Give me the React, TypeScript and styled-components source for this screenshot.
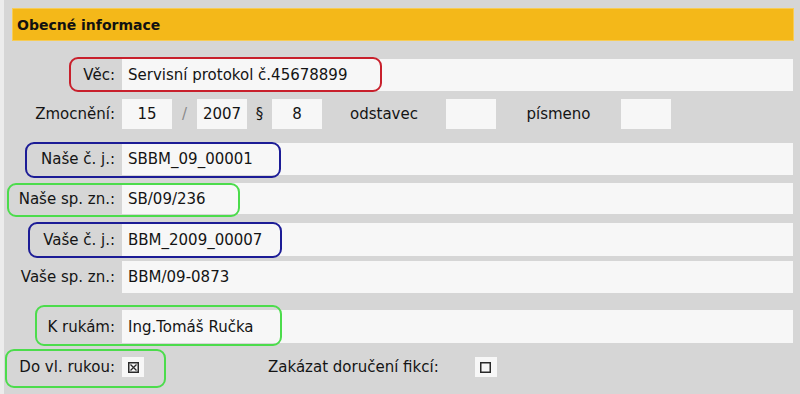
import React from "react";
import styled, { createGlobalStyle } from "styled-components";

const GlobalStyle = createGlobalStyle`
  html, body {
    margin: 0;
    padding: 0;
    background: #d6d6d6;
  }
  body {
    font-family: "DejaVu Sans", Verdana, sans-serif;
    color: #141414;
  }
`;

const Page = styled.div`
  width: 800px;
  height: 394px;
  box-sizing: border-box;
  background: #d6d6d6;
  border-left: 4px solid #ececec;
  padding: 8px 7px 0 8px;
  overflow: hidden;
`;

const Header = styled.div`
  height: 33px;
  background: #f4b819;
  box-shadow: inset 0 0 0 1px #f7cc55;
  display: flex;
  align-items: center;
  padding-left: 5px;
  font-size: 14px;
  font-weight: bold;
  color: #111;
  margin-right: -1px;
`;

const Row = styled.div<{ $top: number; $height: number }>`
  position: relative;
  display: grid;
  grid-template-columns: 103px 1fr;
  column-gap: 7px;
  align-items: center;
  height: ${(p) => p.$height}px;
  margin-top: ${(p) => p.$top}px;
  font-size: 15px;
`;

const Label = styled.div`
  text-align: right;
  white-space: nowrap;
`;

const Field = styled.div`
  height: 100%;
  background: #f7f7f7;
  display: flex;
  align-items: center;
  padding-left: 6px;
  white-space: nowrap;
`;

const Inline = styled.div`
  display: flex;
  align-items: center;
  height: 100%;
`;

const SmallBox = styled.div`
  width: 50px;
  height: 100%;
  background: #f7f7f7;
  display: flex;
  align-items: center;
  justify-content: center;
`;

const Sep = styled.div<{ $width: number; $muted?: boolean }>`
  width: ${(p) => p.$width}px;
  text-align: center;
  color: ${(p) => (p.$muted ? "#8a8a8a" : "#141414")};
  white-space: nowrap;
`;

const CheckCell = styled.div`
  width: 22px;
  height: 20px;
  background: #f7f7f7;
  display: flex;
  align-items: center;
  justify-content: center;
`;

const CheckText = styled.div`
  margin-left: 124px;
  margin-right: 36px;
  white-space: nowrap;
`;

const Mark = styled.div<{
  $color: string;
  $left: number;
  $top: number;
  $width: number;
  $height: number;
}>`
  position: absolute;
  left: ${(p) => p.$left}px;
  top: ${(p) => p.$top}px;
  width: ${(p) => p.$width}px;
  height: ${(p) => p.$height}px;
  box-sizing: border-box;
  border: 2px solid ${(p) => p.$color};
  border-radius: 9px;
  pointer-events: none;
`;

const RED = "#c8202c";
const BLUE = "#1c1c96";
const GREEN = "#4cdc4c";

const Checkbox = ({ checked }: { checked: boolean }) => (
  <svg width="11" height="11" viewBox="0 0 11 11">
    <rect x="0.75" y="0.75" width="9.5" height="9.5" fill="none" stroke="#2a2a2a" strokeWidth="1.5" />
    {checked && (
      <path d="M2.5 2.5 L8.5 8.5 M8.5 2.5 L2.5 8.5" stroke="#2a2a2a" strokeWidth="1.3" />
    )}
  </svg>
);

type Item = {
  label: string;
  value: string;
  top: number;
  height: number;
  mark?: { color: string; left: number; top: number; width: number; height: number };
};

const before: Item[] = [
  {
    label: "Věc:",
    value: "Servisní protokol č.45678899",
    top: 18,
    height: 32,
    mark: { color: RED, left: 57, top: -2, width: 313, height: 35 },
  },
];

const after: Item[] = [
  {
    label: "Naše č. j.:",
    value: "SBBM_09_00001",
    top: 14,
    height: 32,
    mark: { color: BLUE, left: 13, top: -1, width: 256, height: 36 },
  },
  {
    label: "Naše sp. zn.:",
    value: "SB/09/236",
    top: 8,
    height: 31,
    mark: { color: GREEN, left: -5, top: 0, width: 233, height: 34 },
  },
  {
    label: "Vaše č. j.:",
    value: "BBM_2009_00007",
    top: 9,
    height: 33,
    mark: { color: BLUE, left: 16, top: -1, width: 254, height: 36 },
  },
  { label: "Vaše sp. zn.:", value: "BBM/09-0873", top: 5, height: 32 },
  {
    label: "K rukám:",
    value: "Ing.Tomáš Ručka",
    top: 17,
    height: 33,
    mark: { color: GREEN, left: 23, top: -5, width: 247, height: 41 },
  },
];

const FieldRow = ({ item }: { item: Item }) => (
  <Row $top={item.top} $height={item.height}>
    <Label>{item.label}</Label>
    <Field>{item.value}</Field>
    {item.mark && (
      <Mark
        $color={item.mark.color}
        $left={item.mark.left}
        $top={item.mark.top}
        $width={item.mark.width}
        $height={item.mark.height}
      />
    )}
  </Row>
);

export default function App() {
  return (
    <>
      <GlobalStyle />
      <Page>
        <Header>Obecné informace</Header>
        {before.map((item) => (
          <FieldRow key={item.label} item={item} />
        ))}
        <Row $top={8} $height={30}>
          <Label>Zmocnění:</Label>
          <Inline>
            <SmallBox>15</SmallBox>
            <Sep $width={25} $muted>/</Sep>
            <SmallBox>2007</SmallBox>
            <Sep $width={25}>§</Sep>
            <SmallBox>8</SmallBox>
            <Sep $width={124}>odstavec</Sep>
            <SmallBox />
            <Sep $width={125}>písmeno</Sep>
            <SmallBox />
          </Inline>
        </Row>
        {after.map((item) => (
          <FieldRow key={item.label} item={item} />
        ))}
        <Row $top={14} $height={20}>
          <Label>Do vl. rukou:</Label>
          <Inline>
            <CheckCell>
              <Checkbox checked />
            </CheckCell>
            <CheckText>Zakázat doručení fikcí:</CheckText>
            <CheckCell>
              <Checkbox checked={false} />
            </CheckCell>
          </Inline>
          <Mark $color={GREEN} $left={-7} $top={-8} $width={161} $height={39} />
        </Row>
      </Page>
    </>
  );
}
